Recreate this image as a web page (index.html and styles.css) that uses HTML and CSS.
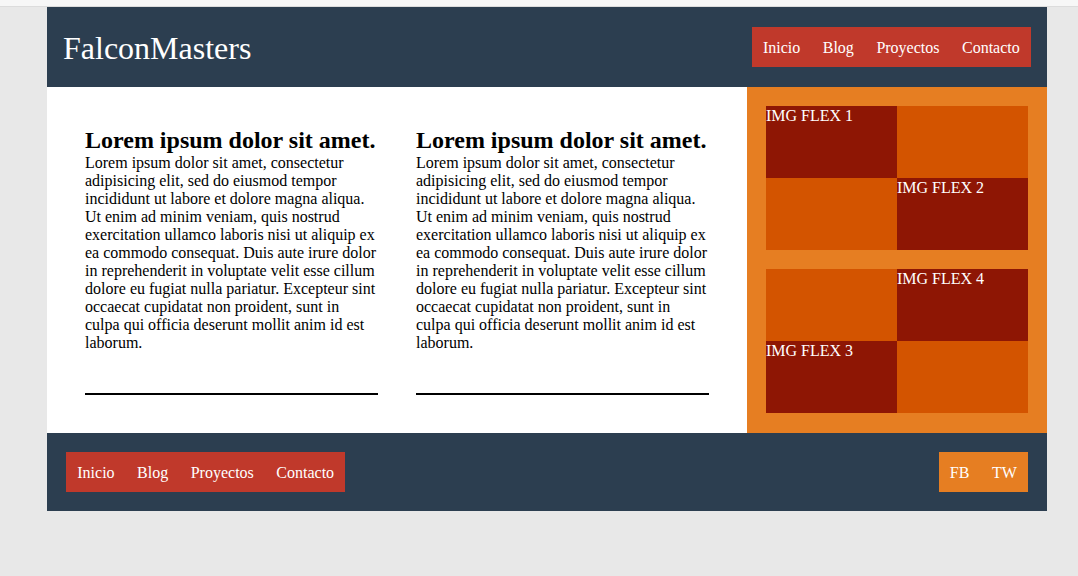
FILE: index.html
```html
<!DOCTYPE html>
<html lang="es">
<head>
<meta charset="utf-8">
<title>FalconMasters</title>
<link rel="stylesheet" href="styles.css">
</head>
<body>
<div class="topbar"></div>
<div class="wrap">
  <header class="header">
    <h1 class="logo">FalconMasters</h1>
    <nav class="nav">
      <a href="#">Inicio</a>
      <a href="#">Blog</a>
      <a href="#">Proyectos</a>
      <a href="#">Contacto</a>
    </nav>
  </header>
  <main class="main">
    <section class="content">
      <article class="article">
        <h2 class="article-title">Lorem ipsum dolor sit amet.</h2>
        <p class="article-text">Lorem ipsum dolor sit amet, consectetur adipisicing elit, sed do eiusmod tempor incididunt ut labore et dolore magna aliqua. Ut enim ad minim veniam, quis nostrud exercitation ullamco laboris nisi ut aliquip ex ea commodo consequat. Duis aute irure dolor in reprehenderit in voluptate velit esse cillum dolore eu fugiat nulla pariatur. Excepteur sint occaecat cupidatat non proident, sunt in culpa qui officia deserunt mollit anim id est laborum.</p>
      </article>
      <article class="article">
        <h2 class="article-title">Lorem ipsum dolor sit amet.</h2>
        <p class="article-text">Lorem ipsum dolor sit amet, consectetur adipisicing elit, sed do eiusmod tempor incididunt ut labore et dolore magna aliqua. Ut enim ad minim veniam, quis nostrud exercitation ullamco laboris nisi ut aliquip ex ea commodo consequat. Duis aute irure dolor in reprehenderit in voluptate velit esse cillum dolore eu fugiat nulla pariatur. Excepteur sint occaecat cupidatat non proident, sunt in culpa qui officia deserunt mollit anim id est laborum.</p>
      </article>
    </section>
    <aside class="sidebar">
      <div class="flexbox">
        <div class="cell dark">IMG FLEX 1</div>
        <div class="cell light"></div>
        <div class="cell light"></div>
        <div class="cell dark">IMG FLEX 2</div>
      </div>
      <div class="flexbox">
        <div class="cell light"></div>
        <div class="cell dark">IMG FLEX 4</div>
        <div class="cell dark">IMG FLEX 3</div>
        <div class="cell light"></div>
      </div>
    </aside>
  </main>
  <footer class="footer">
    <nav class="nav">
      <a href="#">Inicio</a>
      <a href="#">Blog</a>
      <a href="#">Proyectos</a>
      <a href="#">Contacto</a>
    </nav>
    <nav class="social">
      <a href="#">FB</a>
      <a href="#">TW</a>
    </nav>
  </footer>
</div>
</body>
</html>
```

FILE: styles.css
```css
* {
  box-sizing: border-box;
}

body {
  margin: 0;
  background: #e8e8e8;
  font-family: "Liberation Serif", "Times New Roman", serif;
  font-size: 16px;
  color: #000;
}

.topbar {
  height: 7px;
  background: #f7f7f7;
  border-bottom: 1px solid #dcdcdc;
}

.wrap {
  width: 1000px;
  margin-left: 47px;
}

.header {
  background: #2c3e50;
  height: 80px;
  padding: 20px 16px;
  display: flex;
  align-items: center;
  justify-content: space-between;
}

.logo {
  margin: 2px 0 0;
  font-size: 32px;
  font-weight: normal;
  color: #fff;
}

.nav {
  background: #c0392b;
  display: flex;
  height: 40px;
}

.nav a,
.social a {
  color: #fff;
  text-decoration: none;
  line-height: 38px;
  padding: 2px 11.25px 0;
}

.main {
  display: flex;
  background: #fff;
}

.content {
  width: 700px;
  display: flex;
  gap: 38px;
  padding: 40px 38px 38px;
}

.article {
  flex: 1;
  padding-bottom: 41px;
  border-bottom: 2px solid #000;
}

.article-title {
  margin: 0;
  font-size: 24px;
  font-weight: bold;
}

.article-text {
  margin: 0;
  padding-right: 1px;
  line-height: 18px;
}

.sidebar {
  width: 300px;
  background: #e67e22;
  padding: 19px;
  display: flex;
  flex-direction: column;
  gap: 19px;
}

.flexbox {
  display: grid;
  grid-template-columns: 131px 131px;
  grid-template-rows: 72px 72px;
}

.cell {
  color: #fff;
  line-height: 18px;
  padding-top: 1px;
}

.cell.dark {
  background: #8e1604;
}

.cell.light {
  background: #d35400;
}

.footer {
  background: #2c3e50;
  height: 78px;
  padding: 19px;
  display: flex;
  align-items: center;
  justify-content: space-between;
}

.social {
  background: #e67e22;
  display: flex;
  height: 40px;
}
```
